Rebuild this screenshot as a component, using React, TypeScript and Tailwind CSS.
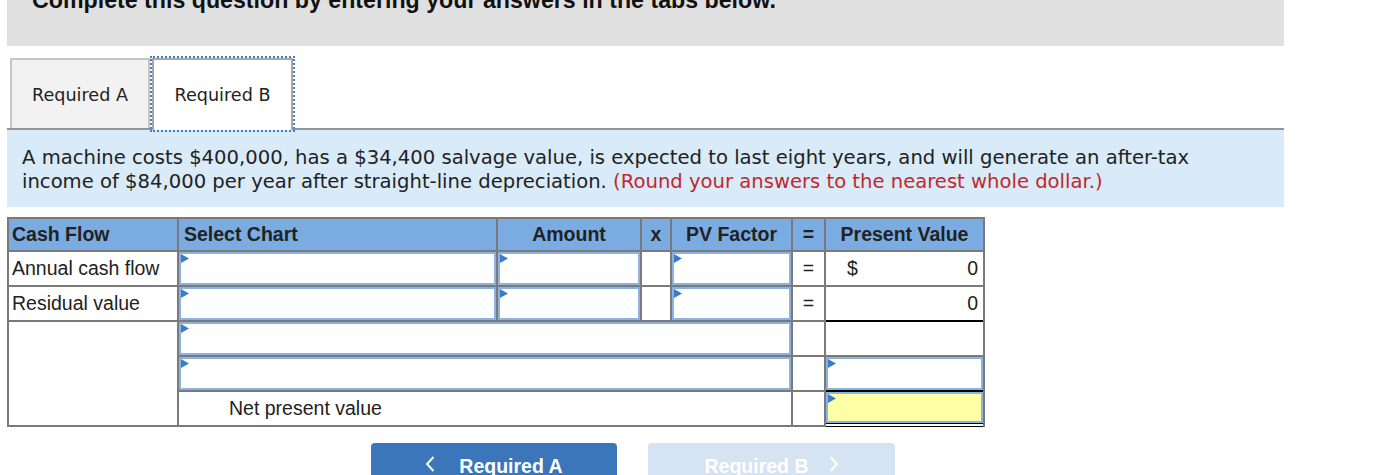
const Flag = () => (
  <svg className="absolute left-0 top-0" width="8" height="9" viewBox="0 0 8 9">
    <polygon points="0,0 8,4.5 0,9" fill="#3b7bc8" />
  </svg>
);

const Field = ({ yellow = false }: { yellow?: boolean }) => (
  <div className={yellow ? "relative h-full w-full border-2 border-[#8db2de] bg-[#ffffa6]" : "relative h-full w-full border-2 border-[#8db2de] bg-white"}>
    <Flag />
  </div>
);

const ChevronLeft = () => (
  <svg width="10" height="16" viewBox="0 0 10 16" className="mt-[4px]">
    <polyline points="8.5,1 2,8 8.5,15" fill="none" stroke="white" strokeWidth="2" />
  </svg>
);

const ChevronRight = () => (
  <svg width="10" height="16" viewBox="0 0 10 16" className="mt-[4px]">
    <polyline points="1.5,1 8,8 1.5,15" fill="none" stroke="white" strokeWidth="2" />
  </svg>
);

export default function App() {
  return (
    <div className="min-h-screen bg-white pl-[7px]">
      <div className="w-[1277px]">
        {/* instructions bar, cut off at the top */}
        <div className="h-[46px] overflow-hidden bg-[#e0e0e0] pl-[25px]">
          <p className="-mt-[13px] font-['Liberation_Sans',Arial,sans-serif] text-[23.2px] font-bold leading-[26px] text-[#111]">
            Complete this question by entering your answers in the tabs below.
          </p>
        </div>

        {/* tabs */}
        <div className="mt-[12px] flex items-end border-b-2 border-[#959595] pl-[3px] font-['DejaVu_Sans',Verdana,sans-serif] text-[17.6px] text-[#222]">
          <div className="flex h-[70px] w-[140px] items-center justify-center border-2 border-b-0 border-[#c6c6c6] bg-[#f2f2f2] pt-[2px]">
            Required A
          </div>
          <div className="-mb-[2px] ml-[2px] flex h-[72px] w-[141px] items-center justify-center border-2 border-b-0 border-[#a6a6a6] bg-white pt-[1px] outline-2 outline-dotted outline-[#3d7fd0]">
            Required B
          </div>
        </div>

        {/* question text */}
        <div className="bg-[#d9ebf9] pb-[13px] pl-[15px] pt-[16px] font-['DejaVu_Sans',Verdana,sans-serif] text-[19.6px] leading-[24px] text-[#222]">
          A machine costs $400,000, has a $34,400 salvage value, is expected to last eight years, and will generate an after-tax
          <br />
          income of $84,000 per year after straight-line depreciation.{" "}
          <span className="text-[#c1272d]">(Round your answers to the nearest whole dollar.)</span>
        </div>

        {/* worksheet */}
        <div className="mt-[10px] grid w-[978px] grid-cols-[168px_317px_142px_28px_119px_31px_157px] grid-rows-[31px_33px_33px_33px_33px_33px] gap-[2px] bg-[#7a7a7a] p-[2px] font-['Liberation_Sans',Arial,sans-serif] text-[19.5px] text-[#222]">
          <div className="flex items-center bg-[#7aace2] pl-[3px] font-bold">Cash Flow</div>
          <div className="flex items-center bg-[#7aace2] pl-[5px] font-bold">Select Chart</div>
          <div className="flex items-center justify-center bg-[#7aace2] font-bold">Amount</div>
          <div className="flex items-center justify-center bg-[#7aace2] font-bold">x</div>
          <div className="flex items-center justify-center bg-[#7aace2] font-bold">PV Factor</div>
          <div className="flex items-center justify-center bg-[#7aace2] font-bold">=</div>
          <div className="flex items-center justify-center bg-[#7aace2] font-bold">Present Value</div>

          <div className="flex items-center bg-white pl-[3px]">Annual cash flow</div>
          <Field />
          <Field />
          <div className="bg-white" />
          <Field />
          <div className="flex items-center justify-center bg-white">=</div>
          <div className="flex items-center justify-between bg-white pl-[21px] pr-[5px]">
            <span>$</span>
            <span>0</span>
          </div>

          <div className="flex items-center bg-white pl-[3px]">Residual value</div>
          <Field />
          <Field />
          <div className="bg-white" />
          <Field />
          <div className="flex items-center justify-center bg-white">=</div>
          <div className="-mb-[2px] flex items-center justify-end border-b-2 border-black bg-white pr-[5px]">
            <span>0</span>
          </div>

          <div className="row-span-3 bg-white" />
          <div className="col-span-4">
            <Field />
          </div>
          <div className="bg-white" />
          <div className="bg-white" />

          <div className="col-span-4">
            <Field />
          </div>
          <div className="bg-white" />
          <div className="-mb-[2px] border-b-2 border-black bg-white">
            <Field />
          </div>

          <div className="col-span-4 flex items-center bg-white pl-[50px]">Net present value</div>
          <div className="bg-white" />
          <div className="-mb-[2px] border-b-4 border-double border-black bg-white">
            <Field yellow />
          </div>
        </div>

        {/* navigation */}
        <div className="mt-[16px] flex gap-[31px] pl-[364px] font-['Liberation_Sans',Arial,sans-serif] text-[19.5px] font-bold text-white">
          <div className="flex h-[48px] w-[246px] items-start justify-center gap-[24px] rounded-t-[4px] bg-[#3a76b9] pt-[9px]">
            <ChevronLeft />
            <span>Required A</span>
          </div>
          <div className="flex h-[48px] w-[247px] items-start justify-center gap-[20px] rounded-t-[4px] bg-[#d6e3f2] pt-[9px]">
            <span>Required B</span>
            <ChevronRight />
          </div>
        </div>
      </div>
    </div>
  );
}
